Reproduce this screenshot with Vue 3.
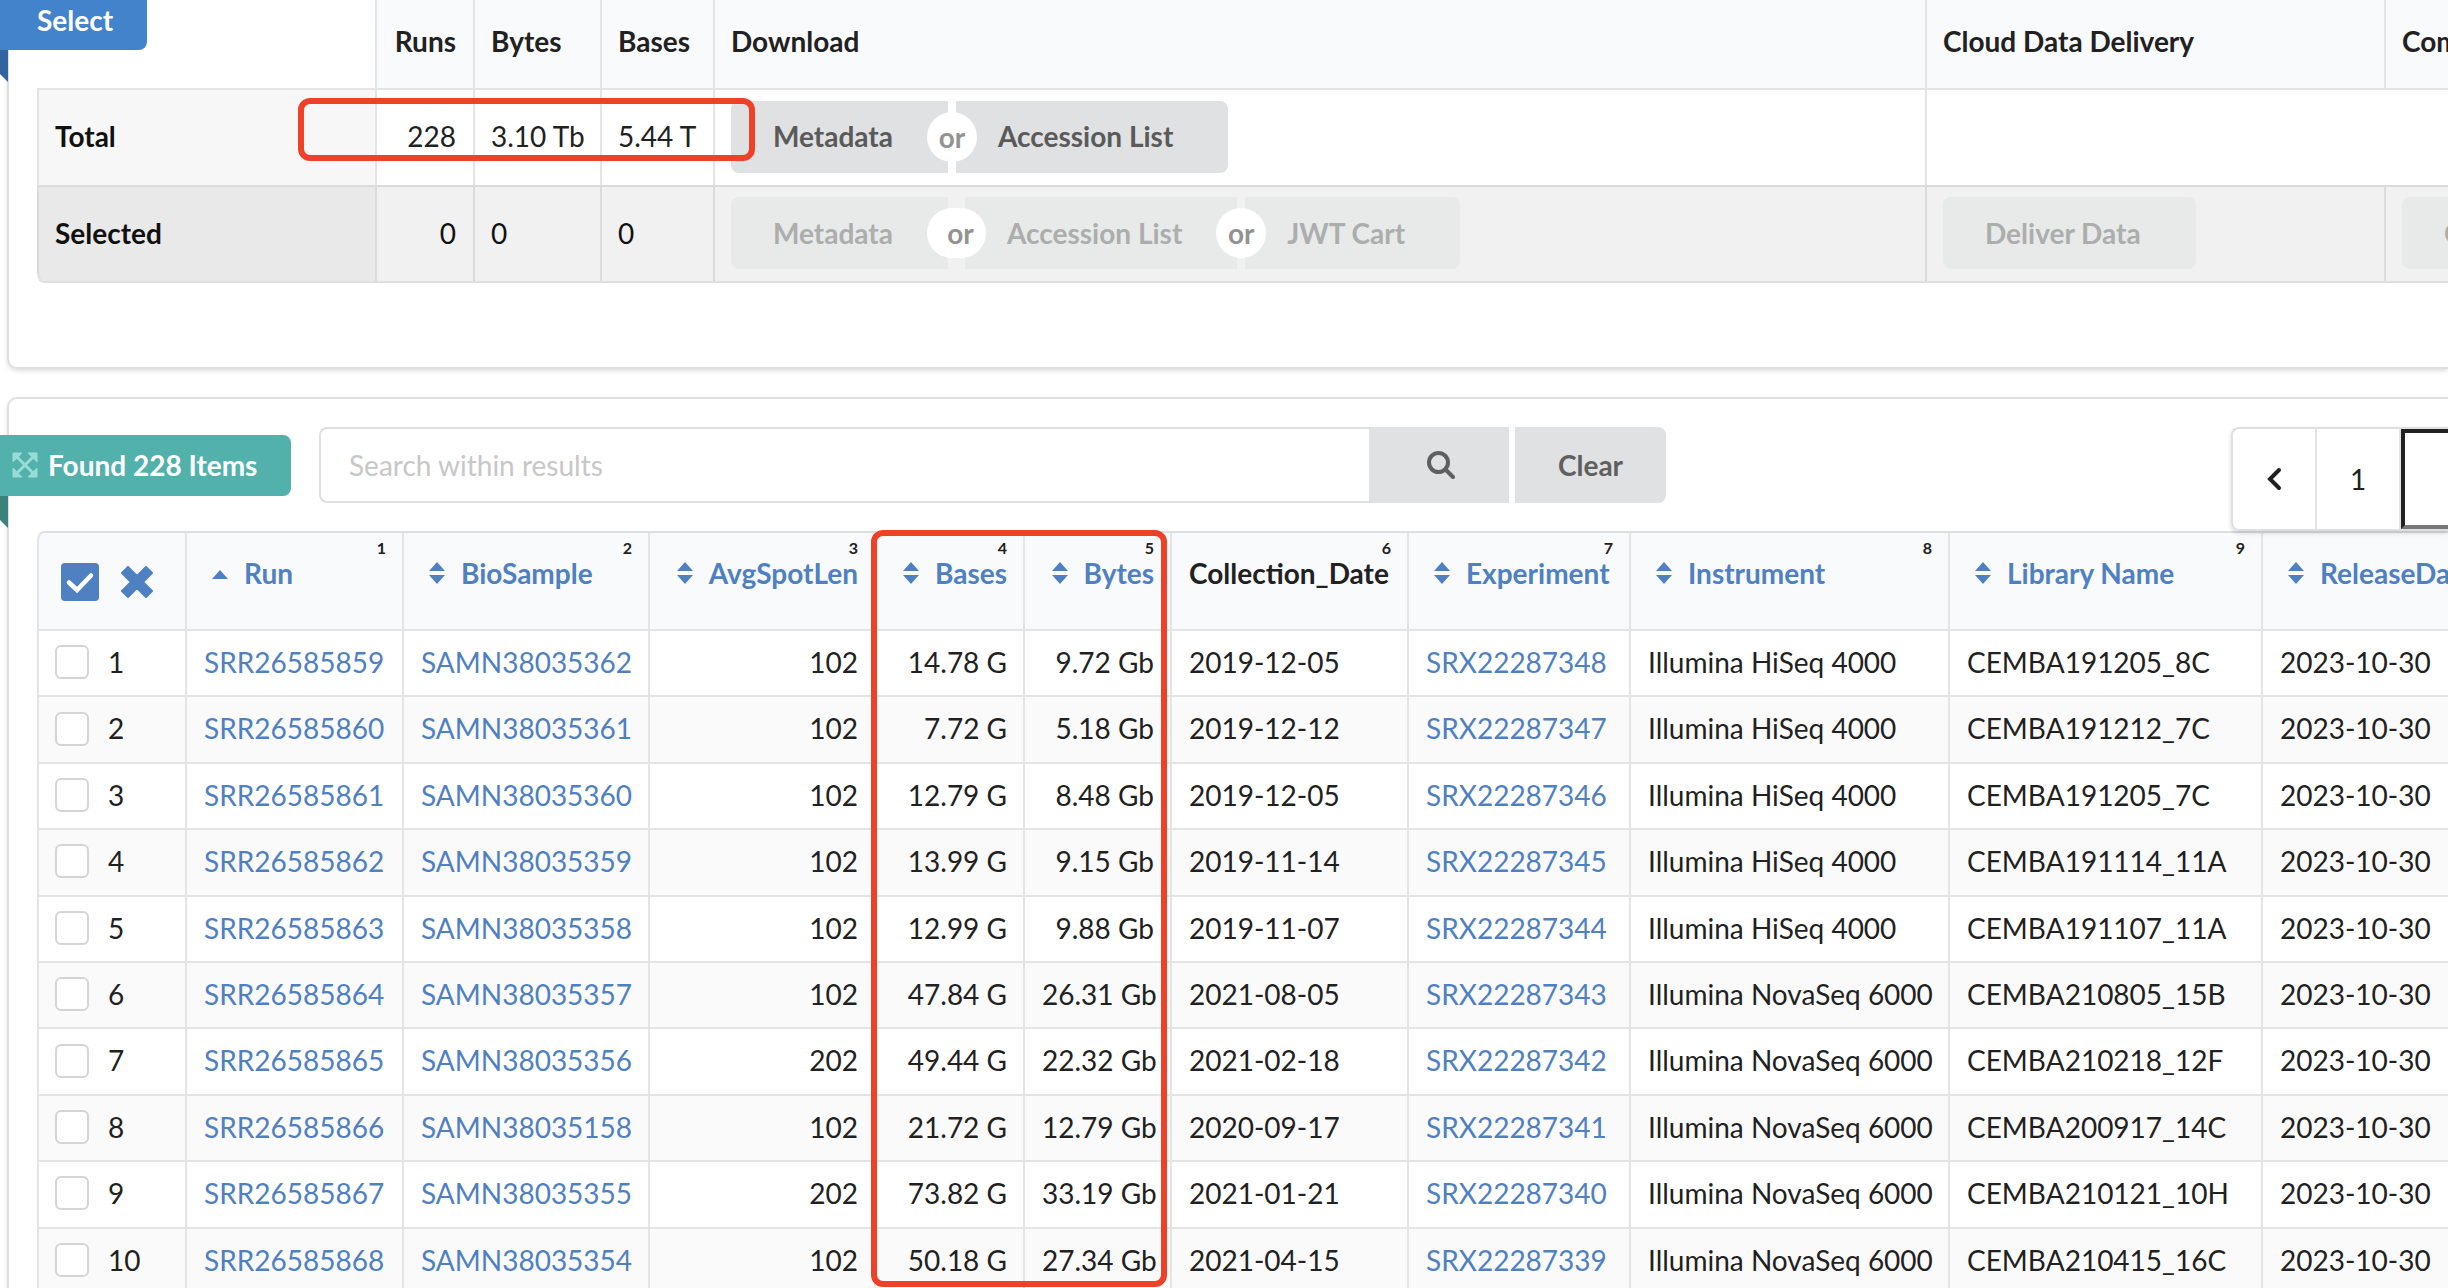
<script setup>
import { ref } from 'vue'

const query = ref('')
const page = ref('')
const checked = ref([])

const columns = [
  { name: 'Run', cls: 'c-run', sort: 'up' },
  { name: 'BioSample', cls: 'c-sample', sort: 'both' },
  { name: 'AvgSpotLen', cls: 'c-spot', sort: 'both', right: true },
  { name: 'Bases', cls: 'c-bases', sort: 'both', right: true },
  { name: 'Bytes', cls: 'c-bytes', sort: 'both', right: true },
  { name: 'Collection_Date', cls: 'c-date' },
  { name: 'Experiment', cls: 'c-exp', sort: 'both' },
  { name: 'Instrument', cls: 'c-inst', sort: 'both' },
  { name: 'Library Name', cls: 'c-lib', sort: 'both' },
  { name: 'ReleaseDate', cls: 'c-rel', sort: 'both' },
]

const rows = [
  ['SRR26585859', 'SAMN38035362', '102', '14.78 G', '9.72 Gb', '2019-12-05', 'SRX22287348', 'Illumina HiSeq 4000', 'CEMBA191205_8C', '2023-10-30'],
  ['SRR26585860', 'SAMN38035361', '102', '7.72 G', '5.18 Gb', '2019-12-12', 'SRX22287347', 'Illumina HiSeq 4000', 'CEMBA191212_7C', '2023-10-30'],
  ['SRR26585861', 'SAMN38035360', '102', '12.79 G', '8.48 Gb', '2019-12-05', 'SRX22287346', 'Illumina HiSeq 4000', 'CEMBA191205_7C', '2023-10-30'],
  ['SRR26585862', 'SAMN38035359', '102', '13.99 G', '9.15 Gb', '2019-11-14', 'SRX22287345', 'Illumina HiSeq 4000', 'CEMBA191114_11A', '2023-10-30'],
  ['SRR26585863', 'SAMN38035358', '102', '12.99 G', '9.88 Gb', '2019-11-07', 'SRX22287344', 'Illumina HiSeq 4000', 'CEMBA191107_11A', '2023-10-30'],
  ['SRR26585864', 'SAMN38035357', '102', '47.84 G', '26.31 Gb', '2021-08-05', 'SRX22287343', 'Illumina NovaSeq 6000', 'CEMBA210805_15B', '2023-10-30'],
  ['SRR26585865', 'SAMN38035356', '202', '49.44 G', '22.32 Gb', '2021-02-18', 'SRX22287342', 'Illumina NovaSeq 6000', 'CEMBA210218_12F', '2023-10-30'],
  ['SRR26585866', 'SAMN38035158', '102', '21.72 G', '12.79 Gb', '2020-09-17', 'SRX22287341', 'Illumina NovaSeq 6000', 'CEMBA200917_14C', '2023-10-30'],
  ['SRR26585867', 'SAMN38035355', '202', '73.82 G', '33.19 Gb', '2021-01-21', 'SRX22287340', 'Illumina NovaSeq 6000', 'CEMBA210121_10H', '2023-10-30'],
  ['SRR26585868', 'SAMN38035354', '102', '50.18 G', '27.34 Gb', '2021-04-15', 'SRX22287339', 'Illumina NovaSeq 6000', 'CEMBA210415_16C', '2023-10-30'],
]

const linked = [0, 1, 6]
</script>

<template>
  <main class="page">
    <section class="panel select-panel">
      <h2 class="ribbon ribbon-blue">Select</h2>
      <table class="summary">
        <colgroup>
          <col class="s-name"><col class="s-runs"><col class="s-bytes"><col class="s-bases"><col class="s-download"><col class="s-cloud"><col>
        </colgroup>
        <thead>
          <tr>
            <td class="corner"></td>
            <th class="right" scope="col">Runs</th>
            <th scope="col">Bytes</th>
            <th scope="col">Bases</th>
            <th scope="col">Download</th>
            <th scope="col">Cloud Data Delivery</th>
            <th scope="col">Computing</th>
          </tr>
        </thead>
        <tbody>
          <tr>
            <th scope="row">Total</th>
            <td class="right">228</td>
            <td>3.10 Tb</td>
            <td>5.44 T</td>
            <td>
              <div class="buttons">
                <button type="button" class="btn">Metadata</button>
                <span class="or"><span class="or-text">or</span></span>
                <button type="button" class="btn">Accession List</button>
              </div>
            </td>
            <td colspan="2"></td>
          </tr>
          <tr class="selected">
            <th scope="row">Selected</th>
            <td class="right">0</td>
            <td>0</td>
            <td>0</td>
            <td>
              <div class="buttons">
                <button type="button" class="btn" disabled>Metadata</button>
                <span class="or or-wide"><span class="or-text">or</span></span>
                <button type="button" class="btn" disabled>Accession List</button>
                <span class="or"><span class="or-text">or</span></span>
                <button type="button" class="btn" disabled>JWT Cart</button>
              </div>
            </td>
            <td><div class="buttons"><button type="button" class="btn" disabled>Deliver Data</button></div></td>
            <td><div class="buttons"><button type="button" class="btn" disabled>Galaxy</button></div></td>
          </tr>
        </tbody>
      </table>
    </section>

    <section class="panel results-panel">
      <div class="toolbar">
        <h2 class="ribbon ribbon-teal">
          <svg class="expand" viewBox="0 0 26 26" aria-hidden="true">
            <path d="M5 5L21 21M21 5L5 21" stroke="currentColor" stroke-width="3" />
            <path d="M1 1h9L1 10zM25 1v9L16 1zM1 25v-9l9 9zM25 25h-9l9-9z" fill="currentColor" stroke="currentColor" stroke-width="1" stroke-linejoin="round" />
          </svg>
          Found 228 Items
        </h2>
        <form class="search" @submit.prevent>
          <input v-model="query" type="text" placeholder="Search within results" aria-label="Search within results">
          <button type="submit" class="search-btn" aria-label="Search">
            <svg viewBox="0 0 28 28" aria-hidden="true">
              <circle cx="11.500" cy="11.500" r="9.500" fill="none" stroke="currentColor" stroke-width="4" />
              <path d="M19 19L26 26" stroke="currentColor" stroke-width="4" stroke-linecap="round" />
            </svg>
          </button>
          <button type="button" class="clear-btn" @click="query = ''">Clear</button>
        </form>
        <nav class="pager" aria-label="Pages">
          <button type="button" class="page-btn" aria-label="Previous page">
            <svg viewBox="0 0 16 24" aria-hidden="true">
              <path d="M13 3L4 12L13 21" fill="none" stroke="currentColor" stroke-width="4" stroke-linecap="round" />
            </svg>
          </button>
          <button type="button" class="page-btn">1</button>
          <input v-model="page" type="text" class="page-input" aria-label="Page number">
        </nav>
      </div>

      <table class="data">
        <colgroup>
          <col class="c-pick">
          <col v-for="c in columns" :key="c.name" :class="c.cls">
        </colgroup>
        <thead>
          <tr>
            <th class="pick-head">
              <div class="pick-tools">
                <button type="button" class="icon-btn" aria-label="Select all">
                  <svg class="check-all" viewBox="0 0 38 38" aria-hidden="true">
                    <rect width="38" height="38" rx="4" fill="currentColor" />
                    <path d="M8 19.500L16 27L30 12.500" fill="none" stroke="#fff" stroke-width="4.500" stroke-linecap="round" />
                  </svg>
                </button>
                <button type="button" class="icon-btn" aria-label="Clear selection">
                  <svg class="cross" viewBox="0 0 32 32" aria-hidden="true">
                    <path d="M7 1L16 10L25 1L31 7L22 16L31 25L25 31L16 22L7 31L1 25L10 16L1 7Z" fill="currentColor" stroke="currentColor" stroke-width="2" stroke-linejoin="round" />
                  </svg>
                </button>
              </div>
            </th>
            <th v-for="(c, i) in columns" :key="c.name" scope="col">
              <span class="order">{{ i + 1 }}</span>
              <a v-if="c.sort" href="#" class="sort" :class="{ 'sort-right': c.right }">
                <svg viewBox="0 0 16 22" aria-hidden="true">
                  <path v-if="c.sort === 'up'" d="M0 17L8 8L16 17z" fill="currentColor" />
                  <path v-else d="M0 9L8 0L16 9zM0 13H16L8 22z" fill="currentColor" />
                </svg>
                {{ c.name }}
              </a>
              <span v-else class="plain">{{ c.name }}</span>
            </th>
          </tr>
        </thead>
        <tbody>
          <tr v-for="(row, r) in rows" :key="row[0]">
            <td class="pick">
              <label><input v-model="checked" type="checkbox" :value="row[0]">{{ r + 1 }}</label>
            </td>
            <td v-for="(cell, i) in row" :key="i" :class="{ right: columns[i].right }">
              <a v-if="linked.includes(i)" href="#">{{ cell }}</a>
              <template v-else>{{ cell }}</template>
            </td>
          </tr>
        </tbody>
      </table>
    </section>

    <div class="mark mark-total"></div>
    <div class="mark mark-columns"></div>
  </main>
</template>

<style>
body {
  overflow: hidden;
  background: #fff;
}
</style>

<style scoped>
.page,
.page * {
  box-sizing: border-box;
}

.page {
  position: relative;
  min-height: 100vh;
  overflow: hidden;
  color: #212121;
  font-family: Lato, "Liberation Sans", sans-serif;
  font-size: 28px;
  line-height: 1.3;
}

button,
input {
  font: inherit;
}

button {
  border: 0;
  padding: 0;
  cursor: pointer;
}

svg {
  display: block;
}

a {
  color: #4e80c2;
  text-decoration: none;
}

.panel {
  position: relative;
  margin-left: 7px;
  border: 2px solid #dedfe0;
  border-right: 0;
  box-shadow: 0 2px 4px rgba(34, 36, 38, 0.15);
}

.select-panel {
  border-top: 0;
  border-radius: 0 0 0 10px;
  padding: 0 0 84px 28px;
}

.results-panel {
  margin-top: 28px;
  border-radius: 10px 0 0 0;
  padding: 28px 0 0 28px;
}

.ribbon {
  position: relative;
  margin: 0;
  color: #fff;
  font-size: 28px;
  font-weight: 700;
  line-height: 34px;
  white-space: nowrap;
}

.ribbon::after {
  content: "";
  position: absolute;
  top: 100%;
  left: 0;
  width: 8px;
  height: 32px;
  clip-path: polygon(0 0, 100% 0, 100% 100%, 0 75%);
}

.ribbon-blue {
  position: absolute;
  top: 0;
  left: -9px;
  width: 147px;
  height: 50px;
  padding: 3px 0 0 37px;
  border-radius: 0 0 8px 0;
  background: #4383cb;
}

.ribbon-blue::after {
  background: #3265a0;
}

.ribbon-teal {
  display: flex;
  flex: none;
  align-items: center;
  gap: 10px;
  width: 291px;
  height: 61px;
  margin: 8px 28px 0 -37px;
  padding: 0 0 2px 12px;
  border-radius: 0 8px 8px 0;
  background: #52b1ab;
}

.ribbon-teal::after {
  background: #3b827d;
}

.expand {
  width: 26px;
  height: 26px;
  color: #98dcd7;
}

table {
  width: 100%;
  table-layout: fixed;
  border-collapse: separate;
  border-spacing: 0;
}

th,
td {
  border-left: 2px solid #e3e4e5;
  padding: 0 17px 0 16px;
  text-align: left;
  white-space: nowrap;
}

.right {
  text-align: right;
}

.summary {
  border-bottom: 2px solid #dedfe0;
  border-radius: 0 0 0 8px;
}

.s-name { width: 338px; }
.s-runs { width: 98px; }
.s-bytes { width: 127px; }
.s-bases { width: 113px; }
.s-download { width: 1212px; }
.s-cloud { width: 459px; }

.summary thead th {
  height: 88px;
  padding-bottom: 6px;
  background: #f9fafc;
}

.summary .corner {
  border-left-color: transparent;
}

.summary tbody th,
.summary tbody td {
  height: 97px;
  border-top: 2px solid #e3e4e5;
  padding-bottom: 2px;
}

.summary tbody th {
  background: #f7f7f7;
  color: #111;
}

.summary .selected th,
.summary .selected td {
  height: 96px;
  border-color: #dadbdb;
  background: #f1f1f1;
}

.summary .selected th {
  border-radius: 0 0 0 8px;
  background: #e9e9e9;
}

.summary .selected td {
  color: #111;
}

.buttons {
  display: flex;
}

.btn {
  height: 72px;
  padding: 0 55px 0 42px;
  background: #e0e1e2;
  color: #5a5a5a;
  font-weight: 700;
}

.btn:first-child {
  border-radius: 8px 0 0 8px;
}

.btn:last-child {
  border-radius: 0 8px 8px 0;
}

.btn:only-child {
  border-radius: 8px;
}

.btn:disabled {
  background: #e8eae9;
  color: #acadad;
}

.or {
  position: relative;
  width: 8px;
}

.or-text {
  position: absolute;
  top: 11px;
  left: -21px;
  width: 50px;
  border-radius: 25px;
  background: #fff;
  color: #929292;
  font-weight: 700;
  line-height: 50px;
  text-align: center;
}

.or-wide {
  width: 17px;
}

.or-wide .or-text {
  width: 59px;
  padding-left: 8px;
}

.toolbar {
  display: flex;
  align-items: flex-start;
}

.search {
  display: flex;
  flex: 0 1 1347px;
  height: 76px;
}

.search input {
  flex: 1;
  min-width: 0;
  border: 2px solid #dedfe0;
  border-right: 0;
  border-radius: 8px 0 0 8px;
  padding: 0 28px;
  outline: 0;
  color: #212121;
}

.search input::placeholder {
  color: #c7c7c7;
  opacity: 1;
}

.search-btn,
.clear-btn {
  background: #e0e1e2;
  color: #5f5f5f;
  font-weight: 700;
}

.search-btn {
  display: flex;
  flex: none;
  align-items: center;
  justify-content: center;
  width: 140px;
  padding-left: 4px;
}

.search-btn svg {
  width: 28px;
  height: 28px;
}

.clear-btn {
  width: 151px;
  margin-left: 6px;
  border-radius: 0 8px 8px 0;
}

.pager {
  position: relative;
  display: flex;
  flex: none;
  width: 217px;
  height: 104px;
  margin-left: auto;
  border: 2px solid #dedfe0;
  border-right: 0;
  border-radius: 8px 0 0 8px;
  box-shadow: 0 2px 4px rgba(34, 36, 38, 0.18);
}

.page-btn {
  display: flex;
  flex: none;
  align-items: center;
  justify-content: center;
  width: 84px;
  border-right: 2px solid #e3e4e5;
  border-radius: 8px 0 0 8px;
  background: transparent;
  color: #212121;
}

.page-btn + .page-btn {
  border-radius: 0;
}

.page-btn svg {
  width: 16px;
  height: 24px;
}

.page-input {
  flex: none;
  width: 120px;
  border: 4px solid;
  border-color: #212121 #777 #777 #212121;
  border-radius: 0;
  padding: 0;
  outline: 0;
}

.data {
  border-top: 2px solid #dedfe0;
  border-radius: 8px 0 0 0;
}

.c-pick { width: 148px; }
.c-run { width: 217px; }
.c-sample { width: 246px; }
.c-spot { width: 226px; }
.c-bases { width: 149px; }
.c-bytes { width: 147px; }
.c-date { width: 237px; }
.c-exp { width: 222px; }
.c-inst { width: 319px; }
.c-lib { width: 313px; }
.c-rel { width: 248px; }

.data thead th {
  height: 96px;
  padding: 5px 16px 0 17px;
  background: #f9fafc;
  vertical-align: top;
}

.data thead .pick-head {
  padding: 30px 0 0 22px;
  border-radius: 8px 0 0 0;
}

.pick-tools {
  display: flex;
  align-items: center;
  gap: 22px;
}

.icon-btn {
  background: transparent;
  color: #4e80c2;
}

.check-all {
  width: 38px;
  height: 38px;
}

.cross {
  width: 32px;
  height: 32px;
}

.order {
  display: block;
  font-size: 16px;
  line-height: 20px;
  text-align: right;
}

.sort {
  display: flex;
  align-items: center;
  gap: 16px;
  padding-left: 8px;
  line-height: 30px;
}

.sort svg {
  flex: none;
  width: 16px;
  height: 22px;
}

.sort-right {
  justify-content: flex-end;
}

.plain {
  display: block;
  line-height: 30px;
}

.data tbody td {
  border-top: 2px solid #e3e4e5;
  padding: 13px 16px 15px 17px;
}

.data tbody tr:nth-child(even) td {
  background: #fafafa;
}

.data tbody .pick {
  padding-left: 16px;
}

.data .pick label {
  display: flex;
  align-items: center;
  gap: 19px;
}

.pick input {
  flex: none;
  appearance: none;
  width: 34px;
  height: 34px;
  margin: 0;
  border: 2px solid #d4d4d5;
  border-radius: 6px;
  background: #fff;
}

.pick input:checked {
  background: #4e80c2;
}

.mark {
  position: absolute;
  border: 6px solid #ee4128;
  border-radius: 12px;
  pointer-events: none;
}

.mark-total {
  top: 98px;
  left: 298px;
  width: 457px;
  height: 63px;
}

.mark-columns {
  top: 530px;
  left: 871px;
  width: 296px;
  height: 757px;
}
</style>
